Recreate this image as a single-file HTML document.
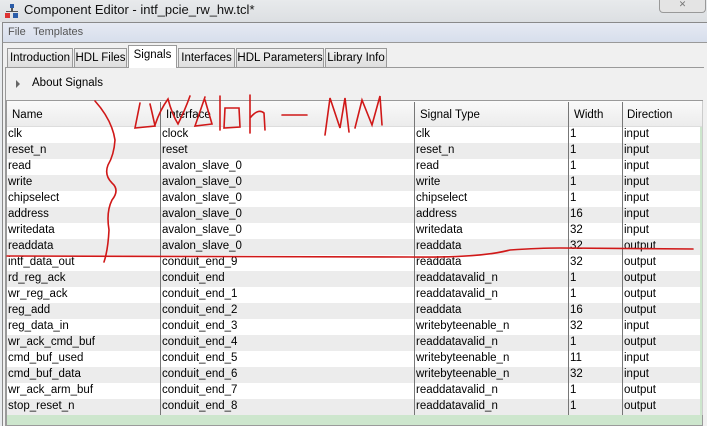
<!DOCTYPE html>
<html><head><style>
*{margin:0;padding:0;box-sizing:border-box}
body{width:707px;height:426px;overflow:hidden;background:#e9ecef;font-family:"Liberation Sans",sans-serif;font-size:11px;position:relative;color:#000}
.abs{position:absolute}
.title{left:0;top:0;width:707px;height:22px;background:linear-gradient(#e8eaec,#dcdfe2);}
.title span{position:absolute;left:24px;top:2px;font-size:13px;color:#111}
.menu{left:2px;top:22px;width:705px;height:20px;background:linear-gradient(#e6eaf3,#d7deec);border-top:1px solid #8a8a8a;border-left:1px solid #8a8a8a;color:#555}
.panel{left:2px;top:42px;width:705px;height:384px;background:#f0f0f0;border-left:1px solid #8a8a8a;border-top:1px solid #999}
.tab{position:absolute;top:48px;height:20px;background:linear-gradient(#f2f2f2,#dedede);border:1px solid #9a9a9a;font-size:11.5px;padding:3px 0 0;white-space:nowrap;text-align:center;overflow:hidden}
.row{position:absolute;left:0;width:693px;height:16px}
.c{position:absolute;top:1px;font-size:11.5px;white-space:nowrap}
.vl{position:absolute;top:102px;width:1px;height:313px;background:#777}
</style></head><body>
<div class="abs title"><svg class="abs" style="left:5px;top:4px" width="14" height="14"><rect x="5" y="0" width="4" height="4" fill="#2a5ca8"/><rect x="6" y="4" width="2" height="3" fill="#555"/><rect x="1" y="7" width="12" height="1" fill="#555"/><rect x="0" y="9" width="5" height="5" fill="#d33"/><rect x="8" y="9" width="5" height="5" fill="#2a5ca8"/></svg><span>Component Editor - intf_pcie_rw_hw.tcl*</span>
<div class="abs" style="left:659px;top:-1px;width:47px;height:14px;border:1px solid #999;border-top:none;border-radius:0 0 4px 4px;background:#e4e4e4;font-size:9px;color:#777;text-align:center">✕</div></div>
<div class="abs menu"><span style="position:absolute;left:5px;top:3px">File</span><span style="position:absolute;left:30px;top:3px">Templates</span></div>
<div class="abs panel"></div>
<div class="abs" style="left:5px;top:67px;width:699px;height:1px;background:#9a9a9a"></div>
<div class="tab" style="left:7px;width:66px">Introduction</div>
<div class="tab" style="left:74px;width:53px">HDL Files</div>
<div class="tab" style="left:128px;top:45px;height:23px;width:49px;background:#fff;border-bottom:none">Signals</div>
<div class="tab" style="left:178px;width:57px">Interfaces</div>
<div class="tab" style="left:236px;width:88px">HDL Parameters</div>
<div class="tab" style="left:325px;width:62px">Library Info</div>
<div class="abs" style="left:5px;top:68px;width:1px;height:358px;background:#9a9a9a"></div>
<div class="abs" style="left:16px;top:80px;width:0;height:0;border-left:4px solid #666;border-top:4px solid transparent;border-bottom:4px solid transparent"></div>
<div class="abs" style="left:32px;top:77px;font-size:11.5px">About Signals</div>
<div class="abs" style="left:6px;top:100px;width:697px;height:326px;border:1px solid #9a9a9a;background:#cde6cd"></div>
<div class="abs" style="left:7px;top:101px;width:695px;height:26px;background:linear-gradient(#fafafa,#ececec);border-bottom:1px solid #ddd">
<span class="c" style="left:5px;top:8px">Name</span><span class="c" style="left:159px;top:8px">Interface</span><span class="c" style="left:413px;top:8px">Signal Type</span><span class="c" style="left:567px;top:8px">Width</span><span class="c" style="left:620px;top:8px">Direction</span></div>
<div class="abs" style="left:7px;top:127px;width:695px;height:288px">
<div class="row" style="top:0;background:#fff"><span class="c" style="left:1px">clk</span><span class="c" style="left:155px">clock</span><span class="c" style="left:409px">clk</span><span class="c" style="left:563px">1</span><span class="c" style="left:617px">input</span></div>
<div class="row" style="top:16px;background:#ececec"><span class="c" style="left:1px">reset_n</span><span class="c" style="left:155px">reset</span><span class="c" style="left:409px">reset_n</span><span class="c" style="left:563px">1</span><span class="c" style="left:617px">input</span></div>
<div class="row" style="top:32px;background:#fff"><span class="c" style="left:1px">read</span><span class="c" style="left:155px">avalon_slave_0</span><span class="c" style="left:409px">read</span><span class="c" style="left:563px">1</span><span class="c" style="left:617px">input</span></div>
<div class="row" style="top:48px;background:#ececec"><span class="c" style="left:1px">write</span><span class="c" style="left:155px">avalon_slave_0</span><span class="c" style="left:409px">write</span><span class="c" style="left:563px">1</span><span class="c" style="left:617px">input</span></div>
<div class="row" style="top:64px;background:#fff"><span class="c" style="left:1px">chipselect</span><span class="c" style="left:155px">avalon_slave_0</span><span class="c" style="left:409px">chipselect</span><span class="c" style="left:563px">1</span><span class="c" style="left:617px">input</span></div>
<div class="row" style="top:80px;background:#ececec"><span class="c" style="left:1px">address</span><span class="c" style="left:155px">avalon_slave_0</span><span class="c" style="left:409px">address</span><span class="c" style="left:563px">16</span><span class="c" style="left:617px">input</span></div>
<div class="row" style="top:96px;background:#fff"><span class="c" style="left:1px">writedata</span><span class="c" style="left:155px">avalon_slave_0</span><span class="c" style="left:409px">writedata</span><span class="c" style="left:563px">32</span><span class="c" style="left:617px">input</span></div>
<div class="row" style="top:112px;background:#ececec"><span class="c" style="left:1px">readdata</span><span class="c" style="left:155px">avalon_slave_0</span><span class="c" style="left:409px">readdata</span><span class="c" style="left:563px">32</span><span class="c" style="left:617px">output</span></div>
<div class="row" style="top:128px;background:#fff"><span class="c" style="left:1px">intf_data_out</span><span class="c" style="left:155px">conduit_end_9</span><span class="c" style="left:409px">readdata</span><span class="c" style="left:563px">32</span><span class="c" style="left:617px">output</span></div>
<div class="row" style="top:144px;background:#ececec"><span class="c" style="left:1px">rd_reg_ack</span><span class="c" style="left:155px">conduit_end</span><span class="c" style="left:409px">readdatavalid_n</span><span class="c" style="left:563px">1</span><span class="c" style="left:617px">output</span></div>
<div class="row" style="top:160px;background:#fff"><span class="c" style="left:1px">wr_reg_ack</span><span class="c" style="left:155px">conduit_end_1</span><span class="c" style="left:409px">readdatavalid_n</span><span class="c" style="left:563px">1</span><span class="c" style="left:617px">output</span></div>
<div class="row" style="top:176px;background:#ececec"><span class="c" style="left:1px">reg_add</span><span class="c" style="left:155px">conduit_end_2</span><span class="c" style="left:409px">readdata</span><span class="c" style="left:563px">16</span><span class="c" style="left:617px">output</span></div>
<div class="row" style="top:192px;background:#fff"><span class="c" style="left:1px">reg_data_in</span><span class="c" style="left:155px">conduit_end_3</span><span class="c" style="left:409px">writebyteenable_n</span><span class="c" style="left:563px">32</span><span class="c" style="left:617px">input</span></div>
<div class="row" style="top:208px;background:#ececec"><span class="c" style="left:1px">wr_ack_cmd_buf</span><span class="c" style="left:155px">conduit_end_4</span><span class="c" style="left:409px">readdatavalid_n</span><span class="c" style="left:563px">1</span><span class="c" style="left:617px">output</span></div>
<div class="row" style="top:224px;background:#fff"><span class="c" style="left:1px">cmd_buf_used</span><span class="c" style="left:155px">conduit_end_5</span><span class="c" style="left:409px">writebyteenable_n</span><span class="c" style="left:563px">11</span><span class="c" style="left:617px">input</span></div>
<div class="row" style="top:240px;background:#ececec"><span class="c" style="left:1px">cmd_buf_data</span><span class="c" style="left:155px">conduit_end_6</span><span class="c" style="left:409px">writebyteenable_n</span><span class="c" style="left:563px">32</span><span class="c" style="left:617px">input</span></div>
<div class="row" style="top:256px;background:#fff"><span class="c" style="left:1px">wr_ack_arm_buf</span><span class="c" style="left:155px">conduit_end_7</span><span class="c" style="left:409px">readdatavalid_n</span><span class="c" style="left:563px">1</span><span class="c" style="left:617px">output</span></div>
<div class="row" style="top:272px;background:#ececec"><span class="c" style="left:1px">stop_reset_n</span><span class="c" style="left:155px">conduit_end_8</span><span class="c" style="left:409px">readdatavalid_n</span><span class="c" style="left:563px">1</span><span class="c" style="left:617px">output</span></div>
</div>
<div class="vl" style="left:160px"></div><div class="vl" style="left:414px"></div><div class="vl" style="left:568px"></div><div class="vl" style="left:622px"></div>
<div class="abs" style="left:702px;top:101px;width:1px;height:314px;background:#ccc"></div>
<svg class="abs" style="left:0;top:0" width="707" height="426" fill="none" stroke="#d01818" stroke-width="1.6" stroke-linecap="round">
<path d="M95 101 Q112 120 115 140 Q114 155 108 165 Q104 175 112 183 Q120 190 112 200 Q106 212 109 230 Q108 250 104 262"/>
<path d="M140 103 L135 128 L155 126 Q152 112 150 104"/>
<path d="M155 125 Q160 110 168 99 Q172 114 178 124 Q185 110 190 96"/>
<path d="M205 97 L195 126 L212 124 L205 100"/>
<path d="M220 96 L220 130"/>
<path d="M225 108 L224 128 L240 127 L239 108 Z"/>
<path d="M250 95 L250 133 M250 118 Q258 108 264 113 L265 130"/>
<path d="M282 115 L307 115"/>
<path d="M325 135 L330 98 L340 128 L345 98 L349 132"/>
<path d="M355 128 L362 100 L372 125 L380 96 L382 125"/>
<path d="M7 256 L410 257 Q480 258 510 250 Q540 248 560 248 L693 249"/>
</svg>
</body></html>
